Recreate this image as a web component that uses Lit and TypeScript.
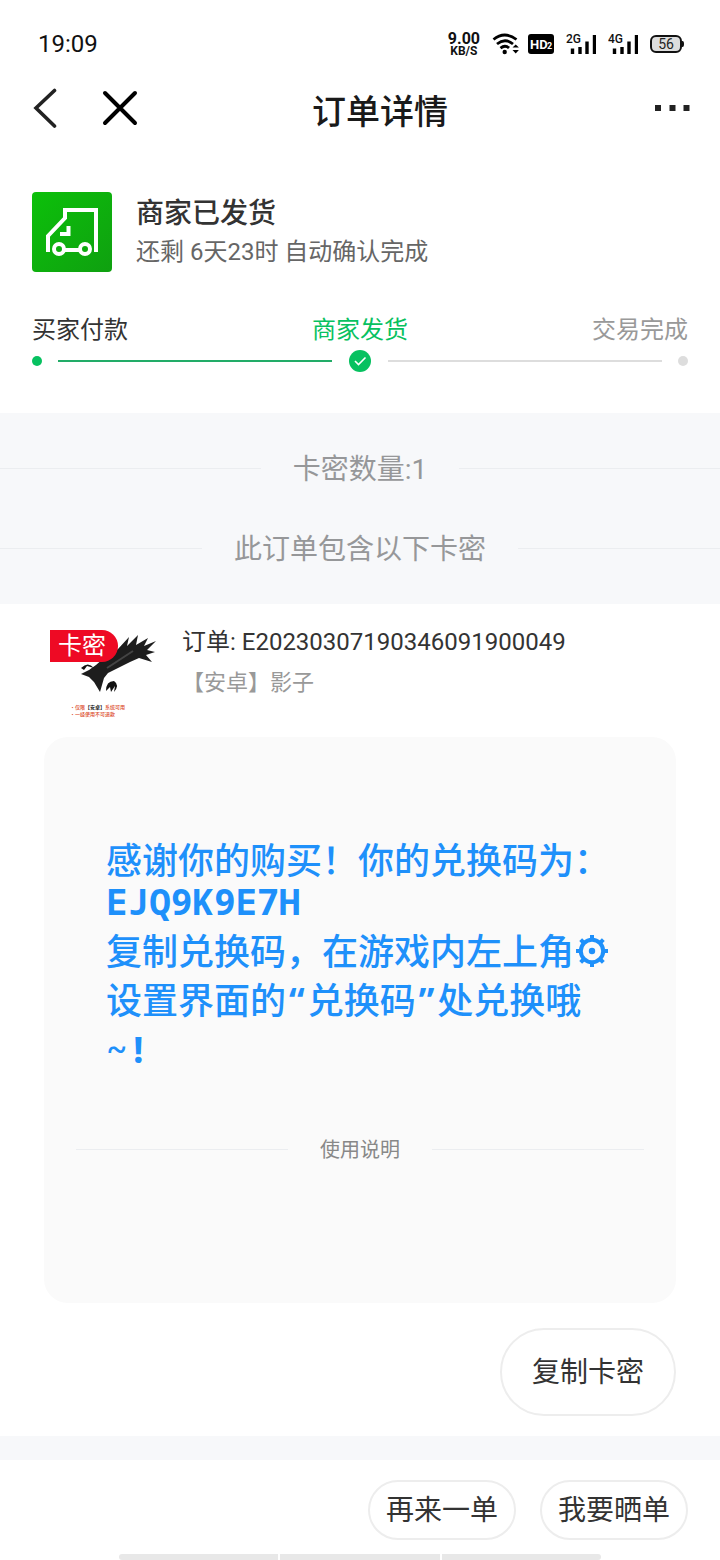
import { LitElement, html, css, svg } from "lit";
import { customElement, property } from "lit/decorators.js";

@customElement("status-bar")
class StatusBar extends LitElement {
  static styles = css`
    :host { display: flex; align-items: center; justify-content: space-between; height: 72px; padding: 16px 36px 0 38px; box-sizing: border-box; color: #111; }
    .time { font-size: 24px; line-height: 28px; }
    .right { display: flex; align-items: center; }
    .speed { display: flex; flex-direction: column; align-items: center; font-weight: 700; font-size: 16px; line-height: 14px; margin-right: 12px; }
    .unit { font-size: 12px; line-height: 11px; }
    .wifi { margin-right: 8px; }
    .hd { margin-right: 12px; }
    .sig { margin-right: 12px; }
    svg { display: block; }
    text { font-family: Roboto, sans-serif; }
  `;
  signal(label: string) {
    return html`<svg class="sig" width="30" height="22" viewBox="0 0 30 22">
      <text x="0" y="10" font-size="12" font-weight="500" fill="#111">${label}</text>
      <path d="M6.500 15.500V21M14 14V21M21 8.500V21M28.500 2V21" stroke="#000" stroke-width="3.400"/>
    </svg>`;
  }
  render() {
    return html`
      <span class="time">19:09</span>
      <div class="right">
        <div class="speed"><span>9.00</span><span class="unit">KB/S</span></div>
        <svg class="wifi" width="28" height="22" viewBox="0 0 28 22" fill="none" stroke="#000" stroke-width="2.800">
          <path d="M1.500 6.500Q12.500-2.500 24.500 6.500M5 11Q13 4.500 21 11M8.500 15.200Q13 11.500 17 15"/>
          <circle cx="12.700" cy="19" r="2.200" fill="#000" stroke="none"/>
          <path d="M20.500 14.500L23.700 11.500 26.900 14.500ZM20.500 17L23.700 20.500 26.900 17Z" fill="#000" stroke="none"/>
        </svg>
        <svg class="hd" width="26" height="20" viewBox="0 0 26 20">
          <rect width="26" height="20" rx="3"/>
          <text x="2" y="15" font-size="13" font-weight="700" fill="#fff">HD</text>
          <text x="19" y="15" font-size="9" font-weight="700" fill="#fff">2</text>
        </svg>
        ${this.signal("2G")}${this.signal("4G")}
        <svg width="34" height="18" viewBox="0 0 34 18">
          <rect x="1" y="1" width="30" height="16" rx="5" fill="#ddd" stroke="#111" stroke-width="2"/>
          <path d="M31 6h1.500q1.500 0 1.500 3t-1.500 3H31Z" fill="#111"/>
          <text x="16" y="14" font-size="14" text-anchor="middle" fill="#222">56</text>
        </svg>
      </div>`;
  }
}

@customElement("nav-bar")
class NavBar extends LitElement {
  static styles = css`
    :host { display: grid; grid-template-columns: 1fr auto 1fr; align-items: center; height: 72px; padding: 0 30px; }
    .title { margin: 0; font-size: 34px; line-height: 48px; font-weight: 500; color: #1a1a1a; padding: 8px 0 0 40px; }
    .left { display: flex; gap: 40px; }
    .end { display: flex; justify-content: flex-end; padding-left: 40px; }
    button { border: 0; background: none; padding: 0; display: block; }
    svg { display: block; }
  `;
  render() {
    return html`
      <div class="left">
        <button aria-label="返回"><svg width="30" height="40" viewBox="0 0 30 40"><path d="M24.500 2.500L6 20 24.500 38" fill="none" stroke="#222" stroke-width="3.600" stroke-linecap="round"/></svg></button>
        <button aria-label="关闭"><svg width="40" height="40" viewBox="0 0 40 40"><path d="M5 5L35 35M35 5L5 35" stroke="#000" stroke-width="4" stroke-linecap="round"/></svg></button>
      </div>
      <h1 class="title">订单详情</h1>
      <div class="end"><button aria-label="更多"><svg width="36" height="8" viewBox="0 0 36 8"><path d="M1 1h6v6H1ZM15.500 1h6v6h-6ZM29.500 1h6v6h-6Z" fill="#222"/></svg></button></div>`;
  }
}

@customElement("order-progress")
class OrderProgress extends LitElement {
  static styles = css`
    :host { display: block; padding: 48px 32px 39px; }
    .state { display: flex; gap: 24px; align-items: center; }
    .text { display: flex; flex-direction: column; }
    .name { margin: 0; padding-top: 4px; font-size: 28px; line-height: 36px; font-weight: 500; color: #333; }
    .left { margin: 0; font-size: 24px; line-height: 40px; color: #666; }
    .labels { display: flex; justify-content: space-between; margin-top: 40px; font-size: 24px; line-height: 36px; color: #333; }
    .now { color: #07c160; }
    .next { color: #999; }
    .track { display: flex; align-items: center; gap: 16px; height: 26px; }
    .dot { width: 10px; height: 10px; border-radius: 50%; background: #07c160; }
    .line { flex: 1; height: 2px; background: #22ac68; }
    .off { background: #ddd; }
    svg { display: block; flex: none; }
  `;
  render() {
    return html`
      <div class="state">
        <svg width="80" height="80" viewBox="0 0 80 80">
          <defs><linearGradient id="g" x1="0" y1="0" x2="1" y2="1"><stop offset="0" stop-color="#0cc00a"/><stop offset="1" stop-color="#0fa010"/></linearGradient></defs>
          <rect width="80" height="80" rx="4" fill="url(#g)"/>
          <g fill="none" stroke="#fff" stroke-width="4">
            <path d="M16 60V44L33 26V18H64V60"/>
            <path d="M36.500 34V42H28"/>
            <circle cx="27" cy="57" r="5"/><circle cx="53" cy="57" r="5"/>
            <path d="M32 58H48"/>
          </g>
        </svg>
        <div class="text"><h2 class="name">商家已发货</h2><p class="left">还剩 6天23时 自动确认完成</p></div>
      </div>
      <div class="labels"><span>买家付款</span><span class="now">商家发货</span><span class="next">交易完成</span></div>
      <div class="track">
        <span class="dot"></span><span class="line"></span>
        <svg width="24" height="24" viewBox="0 0 24 24"><circle cx="12" cy="12" r="11" fill="#07c160"/><path d="M7 12L10.500 15.500 17.500 8.500" fill="none" stroke="#fff" stroke-width="1.600"/></svg>
        <span class="line off"></span><span class="dot off"></span>
      </div>`;
  }
}

@customElement("line-divider")
class LineDivider extends LitElement {
  @property() label = "";
  static styles = css`
    :host { display: flex; align-items: center; gap: 32px; }
    .label { padding-top: 3px; }
    .rule { flex: 1; height: 1px; background: #ebedf0; }
  `;
  render() {
    return html`<span class="rule"></span><span class="label">${this.label}</span><span class="rule"></span>`;
  }
}

@customElement("card-item")
class CardItem extends LitElement {
  static styles = css`
    :host { display: block; padding: 18px 44px 20px; }
    .goods { display: flex; gap: 26px; padding-left: 6px; }
    .thumb { position: relative; width: 106px; height: 96px; }
    .tag { position: absolute; left: 0; top: 8px; padding: 0 12px 0 8px; border-radius: 0 16px 16px 0; background: #ee0a24; color: #fff; font-size: 24px; line-height: 32px; }
    .order { margin: 0; font-size: 24px; line-height: 40px; color: #333; }
    .sku { margin: 0; font-size: 22px; line-height: 42px; color: #999; }
    .panel { margin-top: 19px; padding: 97px 32px 138px; border-radius: 24px; background: #fafafa; }
    .msg { padding: 0 30px; color: #1e90fa; font-size: 36px; line-height: 49px; font-weight: 500; font-family: "Noto Sans CJK SC", sans-serif; }
    .row { display: block; }
    .code { font-family: "Noto Sans Mono", "DejaVu Sans Mono", monospace; font-weight: 700; }
    .short { line-height: 38px; padding-bottom: 4px; }
    .gear { vertical-align: -2px; margin-left: 2px; }
    .use { margin-top: 59px; font-size: 20px; line-height: 29px; color: #888; }
    .act { display: flex; justify-content: flex-end; margin-top: 25px; }
    .copy { border: 2px solid #ededed; border-radius: 44px; background: #fff; padding: 23px 30px 21px; font: inherit; font-size: 28px; line-height: 40px; color: #333; }
    svg { overflow: visible; }
  `;
  gear() {
    const teeth = [0, 45, 90, 135, 180, 225, 270, 315].map(
      (a) => svg`<path d="M16 0V5" transform="rotate(${a} 16 16)"/>`
    );
    return html`<svg class="gear" width="32" height="32" viewBox="0 0 32 32" fill="none" stroke="#1e90fa" stroke-width="4">
      <circle cx="16" cy="16" r="11.200"/>${teeth}<circle cx="16" cy="16" r="3.200" fill="#1e90fa" stroke="none"/></svg>`;
  }
  render() {
    return html`
      <div class="goods">
        <div class="thumb">
          <svg width="106" height="96" viewBox="0 0 106 96" font-family="Noto Sans CJK SC, sans-serif" font-size="5">
            <path d="M54 36L68 27 79 15 77 24 88 13 86 23 98 16 94 24 106 19 97 28 105 30 96 33 102 40 89 36 80 40 58 51 54 56 50 70 44 60 39 55 31 52 39 48 46 43Z" fill="#1d1d1d"/>
            <path d="M31 46Q38 39 44 46L37 44 34 48ZM56 69Q56 59 64 59 70 63 64 70L65 64 61 70 60 65Z" fill="#111"/>
            <path d="M57 46L83 29" stroke="#444" stroke-width="2"/>
            <g fill="#dc4c2c" font-weight="500"><text x="20" y="87">·仅限<tspan fill="#111" font-weight="700">【安卓】</tspan>系统可用</text><text x="20" y="94">·一经使用不可退款</text></g>
          </svg>
          <span class="tag">卡密</span>
        </div>
        <div>
          <p class="order">订单: E20230307190346091900049</p>
          <p class="sku">【安卓】影子</p>
        </div>
      </div>
      <div class="panel">
        <div class="msg">
          <span class="row">感谢你的购买！你的兑换码为：</span>
          <span class="row code short">EJQ9K9E7H</span>
          <span class="row">复制兑换码，在游戏内左上角${this.gear()}</span>
          <span class="row">设置界面的<span class="code">“</span>兑换码<span class="code">”</span>处兑换哦</span>
          <span class="row code">~!</span>
        </div>
        <line-divider class="use" label="使用说明"></line-divider>
      </div>
      <div class="act"><button class="copy">复制卡密</button></div>`;
  }
}

@customElement("app-root")
class AppRoot extends LitElement {
  static styles = css`
    :host { display: block; background: #fff; font-family: Roboto, "Noto Sans CJK SC", sans-serif; color: #333; }
    .info { background: #f7f8fa; padding: 15px 0 16px; color: #969799; font-size: 28px; line-height: 77px; }
    .footer { display: flex; justify-content: flex-end; gap: 24px; padding: 20px 32px 14px; border-top: 24px solid #f7f8fa; }
    .pill { border: 2px solid #ededed; border-radius: 30px; background: #fff; padding: 9px 16px 7px; font: inherit; font-size: 28px; line-height: 40px; color: #333; }
    .hints { display: grid; grid-template-columns: 1fr 1fr 1fr; gap: 2px; margin: 0 119px; height: 6px; border-radius: 3px; overflow: hidden; }
    .hint { background: #e8e8e8; }
  `;
  render() {
    return html`
      <status-bar></status-bar>
      <nav-bar></nav-bar>
      <order-progress></order-progress>
      <div class="info">
        <line-divider label="卡密数量:1"></line-divider>
        <line-divider label="此订单包含以下卡密"></line-divider>
      </div>
      <card-item></card-item>
      <div class="footer"><button class="pill">再来一单</button><button class="pill">我要晒单</button></div>
      <div class="hints"><span class="hint"></span><span class="hint"></span><span class="hint"></span></div>`;
  }
}
